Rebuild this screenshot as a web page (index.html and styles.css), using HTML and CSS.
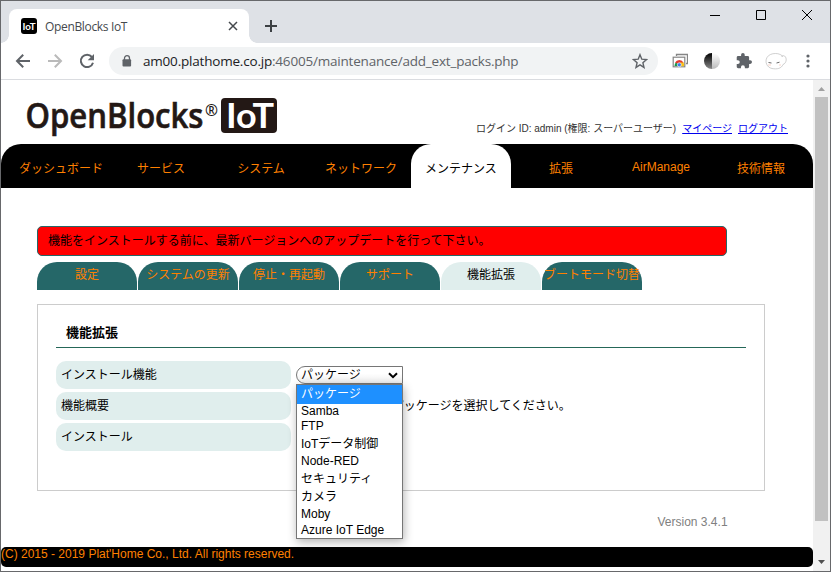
FILE: index.html
```html
<!DOCTYPE html>
<html lang="ja">
<head>
<meta charset="utf-8">
<title>OpenBlocks IoT</title>
<link rel="stylesheet" href="styles.css">
</head>
<body>
<div class="window">
  <div class="tabstrip">
    <div class="browser-tab">
      <span class="favicon"><svg width="16" height="16"><text x="1.5" y="11.5" textLength="13" lengthAdjust="spacingAndGlyphs">IoT</text></svg></span>
      <span class="tab-title">OpenBlocks IoT</span>
      <svg class="tab-close" width="10" height="10" viewBox="0 0 10 10"><path d="M1 1l8 8M9 1l-8 8"/></svg>
    </div>
    <svg class="new-tab" width="12" height="12" viewBox="0 0 12 12"><path d="M6 0v12M0 6h12"/></svg>
    <div class="window-controls">
      <svg width="12" height="12" viewBox="0 0 12 12"><path d="M1 6.500h10"/></svg>
      <svg width="12" height="12" viewBox="0 0 12 12"><path d="M1.500 1.500h9v9h-9z"/></svg>
      <svg width="12" height="12" viewBox="0 0 12 12"><path d="M1 1l10 10M11 1L1 11"/></svg>
    </div>
  </div>
  <div class="toolbar">
    <svg class="nav-icon" width="16" height="16" viewBox="0 0 16 16"><path d="M15 8H2M8.200 1.700L2 8l6.200 6.300"/></svg>
    <svg class="nav-icon off" width="16" height="16" viewBox="0 0 16 16"><path d="M1 8h13M7.800 1.700L14 8l-6.200 6.300"/></svg>
    <svg class="nav-icon" width="16" height="16" viewBox="0 0 16 16"><path d="M12.900 4A6.200 6.200 0 1 0 14 9.700"/><path class="solid" d="M15 1v6.300H8.700z"/></svg>
    <div class="address">
      <svg class="lock" width="10" height="12" viewBox="0 0 10 12"><path d="M2.500 5V3.200a2.500 2.500 0 0 1 5 0V5" fill="none" stroke="#5f6368" stroke-width="1.300"/><rect x="0.500" y="4.300" width="8.600" height="7.200" rx="1" fill="#5f6368"/></svg>
      <span class="url"><b>am00.plathome.co.jp</b>:46005/maintenance/add_ext_packs.php</span>
      <svg class="star" width="16" height="16" viewBox="0 0 16 16"><path d="M8 1.700l1.800 4.500 4.700.4-3.600 3.100 1.100 4.700L8 11.900l-4 2.500 1.100-4.700-3.600-3.100 4.700-.4z"/></svg>
    </div>
    <div class="extensions">
      <svg width="16" height="16" viewBox="0 0 16 16"><path d="M4.500 3V1.500h11v9H14" fill="none" stroke="#858585" stroke-width="1.300"/><rect x="1.200" y="4.200" width="11.600" height="9.600" fill="#fff" stroke="#858585" stroke-width="1.200"/><path d="M2.500 13a4.500 4.500 0 0 1 2-4l2.500 4z" fill="#189b4b"/><path d="M3 9.700a4.800 4.800 0 0 1 8.600 0L7 11z" fill="#e53a2d"/><path d="M7.500 9.500h4a5 5 0 0 1 .5 3.700H8z" fill="#fbc116"/><circle cx="7.300" cy="11.800" r="2" fill="#3c78e8" stroke="#fff" stroke-width=".6"/></svg>
      <svg width="16" height="16" viewBox="0 0 16 16"><defs><linearGradient id="dark" x2="0" y2="1"><stop stop-color="#000"/><stop offset="1" stop-color="#888"/></linearGradient><linearGradient id="light" x2="0" y2="1"><stop stop-color="#fff"/><stop offset="1" stop-color="#bbb"/></linearGradient></defs><path d="M8 0a8 8 0 0 0 0 16z" fill="url(#dark)"/><path d="M8 0a8 8 0 0 1 0 16z" fill="url(#light)"/></svg>
      <svg width="16" height="16" viewBox="1 1 22 22"><path fill="#5f6368" d="M20.500 11H19V7a2 2 0 0 0-2-2h-4V3.500a2.500 2.500 0 0 0-5 0V5H4a2 2 0 0 0-2 2v3.800h1.500a2.700 2.700 0 0 1 0 5.400H2V20c0 1.100.9 2 2 2h3.800v-1.500a2.700 2.700 0 0 1 5.400 0V22H17a2 2 0 0 0 2-2v-4h1.500a2.500 2.500 0 0 0 0-5z"/></svg>
      <svg class="avatar" width="22" height="18" viewBox="0 0 22 18"><path d="M18 5C16 .5 5 0 2 5.500-.5 10 2 15.500 7 16.500c5 1 9.500 0 11-4 3-1 4-5 2.500-7.500-1-1.700-3-1.800-4-.5" fill="#fff" stroke="#bbb" stroke-width=".7"/><path d="M3.500 10.500l3 .5M11.500 11l3-.8" stroke="#444" stroke-width=".8"/><path d="M3 13h3M14 13h2" stroke="#fbd5ca"/></svg>
      <svg class="more" width="4" height="16" viewBox="0 0 4 16"><circle cx="2" cy="3" r="1.600"/><circle cx="2" cy="8" r="1.600"/><circle cx="2" cy="13" r="1.600"/></svg>
    </div>
  </div>
  <div class="viewport">
    <div class="page">
      <header>
        <svg class="logo" width="254" height="46" viewBox="0 0 254 46"><text x="0.500" y="31.500" textLength="178" lengthAdjust="spacingAndGlyphs" class="brand">OpenBlocks</text><text x="180" y="20" textLength="13" lengthAdjust="spacingAndGlyphs" class="reg">®</text><rect x="196" y="2" width="56" height="35" rx="4"/><text x="201" y="31.500" textLength="48" lengthAdjust="spacingAndGlyphs" class="iot">IoT</text></svg>
        <div class="login"><span>ログイン ID: admin (権限: スーパーユーザー)</span><a>マイページ</a><a>ログアウト</a></div>
      </header>
      <nav class="main-nav">
        <a>ダッシュボード</a><a>サービス</a><a>システム</a><a>ネットワーク</a><a class="active">メンテナンス</a><a>拡張</a><a class="latin">AirManage</a><a>技術情報</a>
      </nav>
      <main>
        <div class="alert">機能をインストールする前に、最新バージョンへのアップデートを行って下さい。</div>
        <div class="subtabs">
          <a>設定</a><a>システムの更新</a><a>停止・再起動</a><a>サポート</a><a class="active">機能拡張</a><a>ブートモード切替</a>
        </div>
        <section class="panel">
          <h2>機能拡張</h2>
          <div class="row">
            <div class="label">インストール機能</div>
            <div class="field">
              <div class="select"><span>パッケージ</span><svg width="10" height="7" viewBox="0 0 10 7"><path d="M1 1.200l4 4 4-4"/></svg></div>
              <div class="options">
                <div class="cjk selected">パッケージ</div><div class="samba">Samba</div><div class="ftp">FTP</div><div class="cjk">IoTデータ制御</div><div class="node">Node-RED</div><div class="cjk">セキュリティ</div><div class="cjk">カメラ</div><div class="moby">Moby</div><div class="azure">Azure IoT Edge</div>
              </div>
            </div>
          </div>
          <div class="row"><div class="label">機能概要</div><div class="summary">インストールするパッケージを選択してください。</div></div>
          <div class="row"><div class="label">インストール</div></div>
        </section>
        <div class="version">Version 3.4.1</div>
      </main>
      <footer>(C) 2015 - 2019 Plat'Home Co., Ltd. All rights reserved.</footer>
    </div>
    <div class="scrollbar">
      <svg width="17" height="17"><path d="M5 11l3.500-4 3.500 4z" fill="#a0a0a0"/></svg>
      <div class="thumb"></div>
      <svg width="17" height="17"><path d="M5 6h7l-3.500 4z" fill="#505050"/></svg>
    </div>
  </div>
</div>
</body>
</html>
```
FILE: styles.css
```css
* { box-sizing: border-box; }
body { margin: 0; overflow: hidden; font: 12px/18px "Liberation Sans", "Noto Sans CJK JP", sans-serif; color: #000; }
svg { display: block; flex: none; }
.window { width: 831px; height: 572px; border: 1px solid #67686b; background: #fff; }

.tabstrip { display: flex; height: 42px; background: #dee1e6; padding-left: 8px; }
.browser-tab { position: relative; display: flex; align-items: center; width: 240px; height: 34px; margin-top: 8px; padding: 0 11px 0 12px; background: #fff; border-radius: 8px 8px 0 0; }
.browser-tab::before, .browser-tab::after { content: ""; position: absolute; bottom: 0; width: 8px; height: 8px; }
.browser-tab::before { left: -8px; background: radial-gradient(circle at 0 0, transparent 7.5px, #fff 8px); }
.browser-tab::after { right: -8px; background: radial-gradient(circle at 100% 0, transparent 7.5px, #fff 8px); }
.favicon { background: #000; border-radius: 3px; }
.favicon text { font: bold 10px Lato, sans-serif; fill: #fff; }
.tab-title { flex: 1; margin: 2px 0 0 8px; font: 12px/16px "Open Sans", sans-serif; letter-spacing: -.34px; color: #45494d; }
.tab-close { stroke: #45494d; stroke-width: 1.5; fill: none; }
.new-tab { margin: 19px 0 0 16px; stroke: #3c4043; stroke-width: 2; }
.window-controls { display: flex; gap: 34px; margin: 8px 17px 0 auto; }
.window-controls svg { fill: none; stroke: #000; stroke-width: 1; }

.toolbar { display: flex; align-items: center; height: 37px; padding-left: 14px; border-bottom: 1px solid #dadce0; }
.nav-icon { margin-right: 16px; fill: none; stroke: #5f6368; stroke-width: 2; }
.nav-icon.off { stroke: #bababa; }
.nav-icon .solid { fill: #5f6368; stroke: none; }
.address { display: flex; align-items: center; width: 549px; height: 28px; margin-left: -2px; padding: 0 10px 0 13px; border-radius: 14px; background: #f1f3f4; }
.lock { margin-bottom: 1px; }
.url { flex: 1; margin-left: 11px; font: 13.5px/20px "Open Sans", sans-serif; letter-spacing: -.2px; color: #5f6368; white-space: nowrap; }
.url b { font-weight: 400; color: #202124; }
.star { fill: none; stroke: #5f6368; stroke-width: 1.4; }
.extensions { display: flex; align-items: center; margin-left: 14px; gap: 16px; }
.extensions .avatar { margin-left: -3px; }
.more { fill: #5f6368; margin-left: 3px; }

.viewport { display: flex; height: 491px; }
.page { width: 812px; height: 491px; }
header { display: flex; justify-content: space-between; height: 64px; padding: 16px 25px 0 24px; }
.brand, .reg { font-family: "Open Sans", sans-serif; font-weight: 600; fill: #231815; }
.brand { font-size: 33.5px; stroke: #231815; stroke-width: .6; }
.reg { font-size: 17px; }
.logo rect { fill: #231815; }
.logo .iot { font: bold 33.5px Lato, sans-serif; fill: #fff; }
.login { display: flex; gap: 6px; margin-top: 24px; font-size: 10px; line-height: 17px; color: #333; white-space: nowrap; }
.login a { color: #00e; text-decoration: underline; }

.main-nav { display: flex; height: 44px; padding-left: 10px; background: #000; border-radius: 20px 20px 0 0; }
.main-nav a { width: 100px; padding-top: 16px; text-align: center; color: #ff8000; }
.main-nav .latin { padding-top: 14px; }
.main-nav .active { background: #fff; color: #000; border-radius: 20px 20px 0 0; }

main { height: 359px; padding: 38px 0 0 36px; }
.alert { width: 690px; height: 30px; padding: 5px 10px; border: 1px solid #256768; border-radius: 5px; background: #f00; }
.subtabs { display: flex; gap: 1px; margin-top: 6px; }
.subtabs a { width: 100px; height: 28px; padding-top: 4px; text-align: center; white-space: nowrap; color: #ff8000; background: #256768; border-radius: 20px 20px 0 0; }
.subtabs .active { color: #000; background: #e0eeed; }
.panel { width: 728px; height: 187px; margin-top: 14px; padding: 17px 18px 0; border: 1px solid #ccc; }
h2 { height: 26px; margin: 0 0 13px; padding-left: 10px; border-bottom: 1px solid #256758; font-size: 13px; line-height: 21px; }
.row { display: flex; gap: 5px; margin-bottom: 3px; }
.label { width: 235px; height: 28px; padding: 5px; background: #e0eeed; border-radius: 10px; }
.field { position: relative; padding-top: 5px; }
.select { display: flex; justify-content: space-between; align-items: center; width: 107px; height: 18px; padding: 0 4px; border: 1px solid #767676; border-radius: 10px 0 0 10px; background: linear-gradient(#fff 40%, #eee); }
.select svg { fill: none; stroke: #000; stroke-width: 2; }
.options { position: absolute; z-index: 1; top: 23px; left: 0; width: 107px; height: 155px; border: 1px solid #767676; background: #fff; box-shadow: 1px 3px 9px rgba(0,0,0,.3); }
.options div { padding-left: 4px; height: 16px; line-height: 16px; white-space: nowrap; }
.options .cjk { height: 18px; line-height: 18px; }
.options .selected { height: 19px; background: #1e90ff; color: #fff; }
.options .samba { line-height: 14px; }
.options .ftp { height: 15px; line-height: 13px; }
.options .node { height: 17px; line-height: 17px; }
.summary { padding-top: 5px; }
.version { margin: 22px 0 0 620.5px; color: #808080; }
footer { height: 20px; line-height: 14px; background: #000; color: #ff8000; border-radius: 5px; }
.scrollbar { width: 17px; height: 491px; background: #f1f1f1; }
.thumb { width: 13px; height: 424px; margin: 0 2px 33px; background: #c1c1c1; }
```
